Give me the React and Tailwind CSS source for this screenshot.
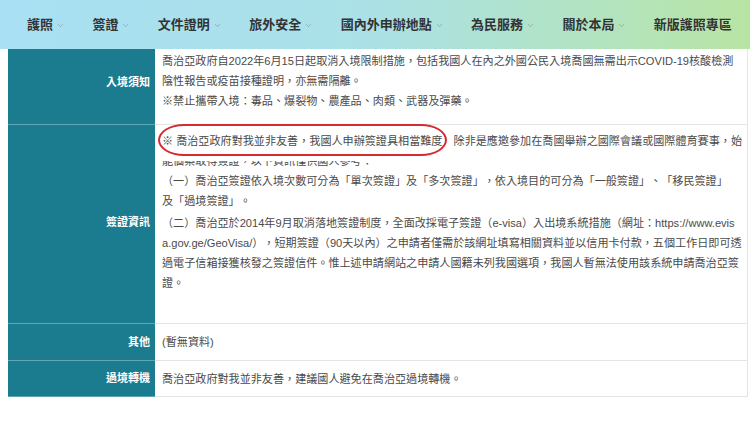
import { ChevronDown } from 'lucide-react'

const navItems = [
  { label: '護照', menu: true },
  { label: '簽證', menu: true },
  { label: '文件證明', menu: true },
  { label: '旅外安全', menu: true },
  { label: '國內外申辦地點', menu: true },
  { label: '為民服務', menu: true },
  { label: '關於本局', menu: true },
  { label: '新版護照專區', menu: false },
]

const font = { fontFamily: '"Liberation Sans", "Noto Sans CJK TC", sans-serif' }

function Row({ label, children, labelClass = '', cellClass = '' }) {
  return (
    <div className="flex">
      <div
        className={`w-[147px] shrink-0 bg-[#1b7b8f] border-b border-[#5fa7b7] flex items-center justify-end pr-[5px] text-white text-[11px] font-bold ${labelClass}`}
      >
        {label}
      </div>
      <div className={`relative flex-1 border-b border-[#e4e4e4] pl-[7px] pr-[5px] text-[11.1px] leading-[20px] text-[#4a4a4a] break-all [text-spacing-trim:space-all] ${cellClass}`}>
        {children}
      </div>
    </div>
  )
}

export default function App() {
  return (
    <div className="w-[750px] h-[422px] bg-white overflow-hidden" style={font}>
      {/* Top navigation */}
      <nav className="h-[49px] flex items-center pl-[27px] gap-[27.4px] bg-linear-to-r from-[#a9e0f4] via-[#abe1e6] to-[#b8e4a3]">
        {navItems.map((item) => (
          <div key={item.label} className="flex items-center gap-[3px] text-[13px] font-bold text-[#333]">
            <span>{item.label}</span>
            {item.menu && <ChevronDown size={9} strokeWidth={1.5} className="text-[#8a8a8a] mt-[2px]" />}
          </div>
        ))}
      </nav>

      {/* Info table */}
      <div className="ml-[8px] w-[740px] border-r border-[#e4e4e4]">
        <Row label="入境須知" labelClass="pb-[8px]" cellClass="pt-[2px] pb-[13px]">
          喬治亞政府自2022年6月15日起取消入境限制措施，包括我國人在內之外國公民入境喬國無需出示COVID-19核酸檢測陰性報告或疫苗接種證明，亦無需隔離。
          <br />
          ※禁止攜帶入境：毒品、爆裂物、農產品、肉類、武器及彈藥。
        </Row>

        <Row label="簽證資訊" labelClass="pb-[4px]" cellClass="pt-[6px] pb-[30px]">
          {/* white patch of the pasted highlight, sits under the highlighted words */}
          <div className="absolute left-[2px] top-0 w-[294px] h-[36px] bg-white z-0" />
          <div className="absolute left-[3px] top-[-1px] w-[289px] h-[32px] border-2 border-[#d62a2f] rounded-[26px/16px] z-20" />
          <p>
            <span className="relative z-10">※ 喬治亞政府對我並非友善，我國人申辦簽證具相當難度</span>
            ，除非是應邀參加在喬國舉辦之國際會議或國際體育賽事，始能個案取得簽證，以下資訊僅供國人參考：
            <br />
            （一）喬治亞簽證依入境次數可分為「單次簽證」及「多次簽證」，依入境目的可分為「一般簽證」、「移民簽證」
            <br />
            及「過境簽證」。
          </p>
          <p className="mt-[2px]">
            （二）喬治亞於2014年9月取消落地簽證制度，全面改採電子簽證（e-visa）入出境系統措施（網址：https://www.evisa.gov.ge/GeoVisa/），短期簽證（90天以內）之申請者僅需於該網址填寫相關資料並以信用卡付款，五個工作日即可透過電子信箱接獲核發之簽證信件。惟上述申請網站之申請人國籍未列我國選項，我國人暫無法使用該系統申請喬治亞簽證。
          </p>
        </Row>

        <Row label="其他" cellClass="pt-[8px] pb-[8px]">
          (暫無資料)
        </Row>

        <Row label="過境轉機" cellClass="pt-[8px] pb-[7px]">
          喬治亞政府對我並非友善，建議國人避免在喬治亞過境轉機。
        </Row>
      </div>
    </div>
  )
}
